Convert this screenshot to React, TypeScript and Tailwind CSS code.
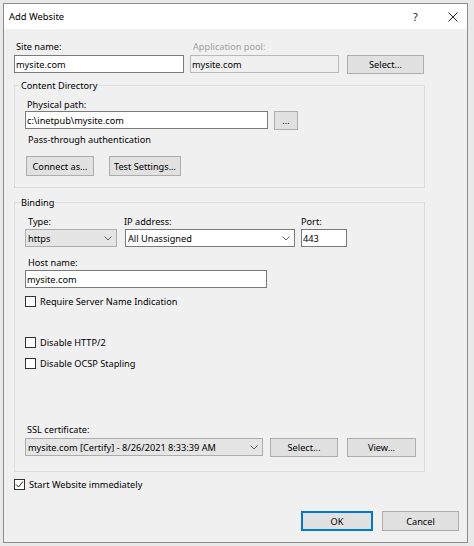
import type { ReactNode } from "react";

// Windows 10 "Add Website" dialog (IIS Manager)

function Chevron() {
  return (
    <svg width="8" height="5" viewBox="0 0 8 5" className="shrink-0">
      <path d="M0.5 0.5 L4 4 L7.5 0.5" fill="none" stroke="#606060" strokeWidth="1" />
    </svg>
  );
}

function Button({ className, children, primary }: { className: string; children: ReactNode; primary?: boolean }) {
  return (
    <div
      className={`flex items-center justify-center bg-[#e1e1e1] ${
        primary ? "border-2 border-[#0078d7]" : "border border-[#adadad]"
      } ${className}`}
    >
      {children}
    </div>
  );
}

function TextBox({ className, value, disabled }: { className: string; value: string; disabled?: boolean }) {
  return (
    <div
      className={`flex h-[18px] items-center overflow-hidden whitespace-nowrap pl-[1px] ${
        disabled ? "border border-[#b9b9b9] bg-[#f0f0f0]" : "border border-[#7a7a7a] bg-white"
      } ${className}`}
    >
      {value}
    </div>
  );
}

function Combo({ className, value, editable }: { className: string; value: string; editable?: boolean }) {
  return (
    <div
      className={`flex h-[18px] items-center justify-between whitespace-nowrap pl-[2px] pr-[4px] ${
        editable ? "border border-[#7a7a7a] bg-white" : "border border-[#adadad] bg-[#e5e5e5]"
      } ${className}`}
    >
      <span>{value}</span>
      <Chevron />
    </div>
  );
}

function Check({ label, checked, className }: { label: string; checked?: boolean; className?: string }) {
  return (
    <div className={`flex h-[13px] items-center gap-[4px] ${className ?? ""}`}>
      <div className="flex h-[11px] w-[11px] shrink-0 items-center justify-center border border-[#333333] bg-white">
        {checked ? (
          <svg width="9" height="9" viewBox="0 0 9 9">
            <path d="M1 4.5 L3.5 7 L8 1.5" fill="none" stroke="#222222" strokeWidth="1" />
          </svg>
        ) : null}
      </div>
      <span className="whitespace-nowrap">{label}</span>
    </div>
  );
}

function Label({ className, children }: { className?: string; children: ReactNode }) {
  return <div className={`h-[13px] whitespace-nowrap ${className ?? ""}`}>{children}</div>;
}

export default function App() {
  return (
    <div className="h-[546px] w-[474px] overflow-hidden bg-[#e9e9e9] pl-[3px] pt-[3px] font-['Noto_Sans',sans-serif] text-[9.2px] leading-[13px] text-black">
      <div className="flex h-[540px] w-[465px] flex-col border border-[#8c8c8c] bg-[#f0f0f0]">
        {/* title bar */}
        <div className="flex h-[25px] shrink-0 items-center bg-white pl-[5px] pr-[9px]">
          <span className="text-[9.4px]">Add Website</span>
          <span className="ml-auto w-[6px] text-[11px] text-[#222]">?</span>
          <svg width="10" height="10" viewBox="0 0 10 10" className="ml-[29px]">
            <path d="M0.5 0.5 L9.5 9.5 M9.5 0.5 L0.5 9.5" stroke="#222" strokeWidth="1" />
          </svg>
        </div>

        <div className="flex flex-col pl-[10px] pr-[8px]">
          {/* site name / app pool */}
          <div className="mt-[11px] flex">
            <div className="flex w-[170px] flex-col">
              <Label className="pl-[2px]">Site name:</Label>
              <TextBox className="mt-[2px] w-full" value="mysite.com" />
            </div>
            <div className="ml-[6px] flex w-[149px] flex-col">
              <Label className="pl-[3px] text-[#a0a0a0]">Application pool:</Label>
              <TextBox className="mt-[2px] w-full" value="mysite.com" disabled />
            </div>
            <div className="ml-[8px] flex w-[77px] flex-col">
              <div className="h-[13px]" />
              <Button className="mt-[2px] h-[19px] w-full">Select...</Button>
            </div>
          </div>

          {/* content directory */}
          <fieldset className="mt-[5px] w-[411px] border border-[#dcdcdc] pb-[11px] pl-[5px] pt-[6px]">
            <legend className="h-[13px] px-[1px] leading-[13px]">Content Directory</legend>
            <div className="flex flex-col pl-[5px]">
              <Label className="pl-[2px]">Physical path:</Label>
              <div className="flex">
                <TextBox className="w-[243px]" value="c:\inetpub\mysite.com" />
                <Button className="ml-[6px] h-[19px] w-[24px]">...</Button>
              </div>
              <Label className="mt-[3px] pl-[3px]">Pass-through authentication</Label>
              <div className="mt-[10px] flex">
                <Button className="ml-[1px] h-[20px] w-[68px]">Connect as...</Button>
                <Button className="ml-[15px] h-[20px] w-[72px]">Test Settings...</Button>
              </div>
            </div>
          </fieldset>

          {/* binding */}
          <fieldset className="mt-[8px] w-[411px] border border-[#dcdcdc] pb-[14px] pl-[5px] pt-[6px]">
            <legend className="h-[13px] px-[1px] leading-[13px]">Binding</legend>
            <div className="flex flex-col pl-[5px]">
              <div className="flex">
                <div className="flex w-[92px] flex-col">
                  <Label className="pl-[3px]">Type:</Label>
                  <Combo className="mt-[1px] w-full" value="https" />
                </div>
                <div className="ml-[8px] flex w-[170px] flex-col">
                  <Label className="-ml-[1px]">IP address:</Label>
                  <Combo className="mt-[1px] w-full" value="All Unassigned" editable />
                </div>
                <div className="ml-[6px] flex w-[46px] flex-col">
                  <Label>Port:</Label>
                  <TextBox className="mt-[1px] w-full" value="443" />
                </div>
              </div>

              <Label className="mt-[9px] pl-[3px]">Host name:</Label>
              <TextBox className="mt-[1px] w-[242px]" value="mysite.com" />

              <Check className="mt-[7px]" label="Require Server Name Indication" />
              <Check className="mt-[28px]" label="Disable HTTP/2" />
              <Check className="mt-[8px]" label="Disable OCSP Stapling" />

              <Label className="mt-[53px] pl-[2px]">SSL certificate:</Label>
              <div className="mt-[2px] flex">
                <Combo className="w-[238px]" value="mysite.com [Certify] - 8/26/2021 8:33:39 AM" />
                <Button className="ml-[7px] h-[19px] w-[68px]">Select...</Button>
                <Button className="ml-[9px] h-[19px] w-[69px]">View...</Button>
              </div>
            </div>
          </fieldset>

          <Check className="mt-[6px]" label="Start Website immediately" checked />

          <div className="mt-[20px] flex justify-end">
            <Button className="h-[20px] w-[72px]" primary>
              OK
            </Button>
            <Button className="ml-[9px] h-[20px] w-[77px]">Cancel</Button>
          </div>
        </div>
      </div>
    </div>
  );
}
